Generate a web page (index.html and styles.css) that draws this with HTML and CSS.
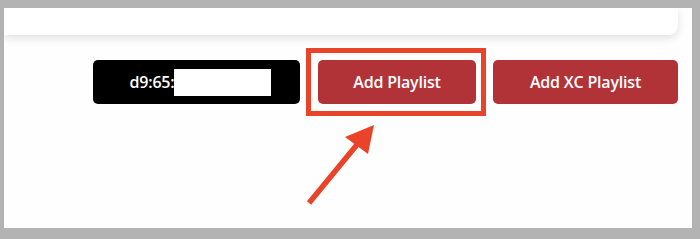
FILE: index.html
```html
<!DOCTYPE html>
<html lang="en">
<head>
    <meta charset="UTF-8">
    <meta name="viewport" content="width=device-width, initial-scale=1.0">
    <title>Playlists</title>
    <link rel="stylesheet" href="styles.css">
</head>
<body>
    <div class="frame">
        <div class="top-card"></div>

        <div class="actions">
            <button class="mac-button">d9:65:<span class="mac-redacted"></span></button>
            <button class="action-button" id="add-playlist">Add Playlist</button>
            <button class="action-button">Add XC Playlist</button>
        </div>
    </div>

    <!-- annotation drawn over the screenshot -->
    <svg class="annotation" width="700" height="239" viewBox="0 0 700 239">
        <rect x="308.5" y="50.5" width="175" height="63" fill="none" stroke="#e9432a" stroke-width="5"/>
        <line x1="309" y1="203" x2="360" y2="141" stroke="#e9432a" stroke-width="5.5"/>
        <polygon points="374,125 345,137 368,154" fill="#e9432a"/>
    </svg>
</body>
</html>
```

FILE: styles.css
```css
* {
    margin: 0;
    padding: 0;
    box-sizing: border-box;
}

body {
    background: #b3b3b3;
    font-family: 'Open Sans', 'Liberation Sans', sans-serif;
    width: 700px;
    height: 239px;
    overflow: hidden;
    position: relative;
}

.frame {
    margin: 8px 8px 0 4px;
    width: 688px;
    height: 220px;
    background: #fefefe;
    overflow: hidden;
}

.top-card {
    width: 674px;
    height: 27px;
    background: #fff;
    border-radius: 0 0 9px 0;
    box-shadow: 0 3px 8px rgba(0, 0, 0, 0.12);
}

.actions {
    display: flex;
    justify-content: flex-end;
    gap: 17px;
    padding-right: 14px;
    margin-top: 25px;
}

.mac-button,
.action-button {
    height: 44px;
    border: none;
    border-radius: 5px;
    color: #fff;
    font-family: inherit;
    font-size: 16px;
    font-weight: 600;
    letter-spacing: -0.2px;
    display: flex;
    align-items: center;
    justify-content: center;
}

.mac-button {
    width: 207px;
    background: #000;
    padding-left: 8px;
}

.mac-redacted {
    display: inline-block;
    width: 97px;
    height: 27px;
    background: #fff;
}

.action-button {
    background: #b13237;
}

#add-playlist {
    width: 158px;
    margin-left: 1px;
}

.action-button:last-child {
    width: 185px;
}

.annotation {
    position: absolute;
    top: 0;
    left: 0;
}
```
